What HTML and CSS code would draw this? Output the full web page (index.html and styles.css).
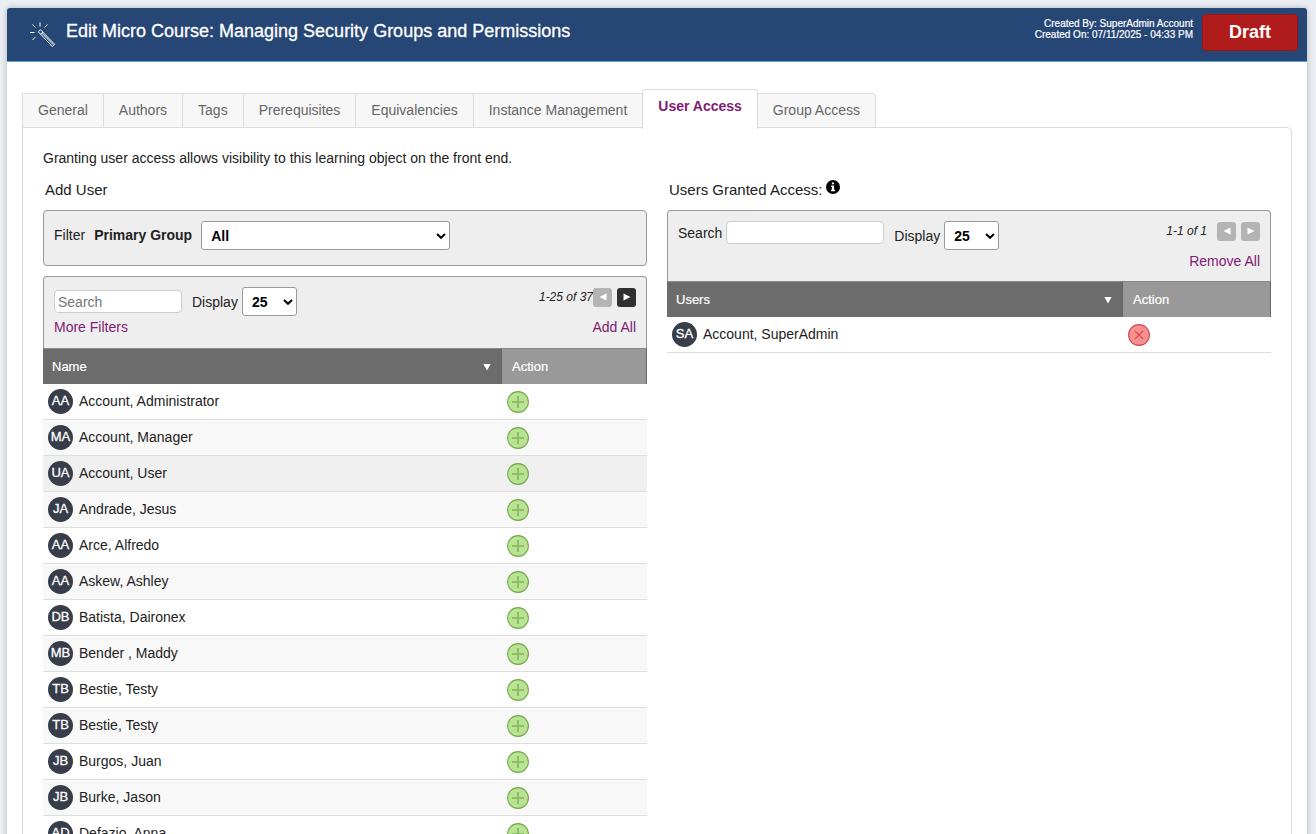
FILE: index.html
```html
<!DOCTYPE html>
<html lang="en">
<head>
<meta charset="utf-8">
<title>Edit Micro Course</title>
<link rel="stylesheet" href="styles.css">
</head>
<body>
<svg class="defs" aria-hidden="true">
  <symbol id="chev" viewBox="0 0 10 6"><path d="M1 1l4 3.8L9 1" fill="none" stroke="currentColor" stroke-width="2"/></symbol>
  <symbol id="left" viewBox="0 0 8 8"><path d="M7.5 0.5v7L0.5 4z" fill="currentColor"/></symbol>
  <symbol id="right" viewBox="0 0 8 8"><path d="M0.5 0.5v7L7.5 4z" fill="currentColor"/></symbol>
  <symbol id="down" viewBox="0 0 8 8"><path d="M0.4 1h7.2L4 7.6z" fill="currentColor"/></symbol>
  <symbol id="plus" viewBox="0 0 22 22"><circle cx="11" cy="11" r="10.4" fill="#b9e292" stroke="#72aa48" stroke-width="1.1"/><path d="M11 5v12M5 11h12" stroke="#82b65c" stroke-width="1.7"/></symbol>
</svg>
<main class="card">
  <header class="bar">
    <svg class="wand" viewBox="0 0 26 26" fill="none" stroke="currentColor" stroke-width="1" aria-hidden="true">
      <path d="M8.3 9.8l2.2-2.1L24.6 22.3 22.3 24.6zM10.6 12.2l2.3-2.2M12 11.2l11.2 11.6"/>
      <path d="M10 0.5v4M2.5 2.5l2.8 2.9M17.5 2.5l-2.8 2.9M0 10.5h4.5M2.5 18l2.8-2.9"/>
    </svg>
    <h1 class="title">Edit Micro Course: Managing Security Groups and Permissions</h1>
    <div class="meta">Created By: SuperAdmin Account<br>Created On: 07/11/2025 - 04:33 PM</div>
    <button class="draft" type="button">Draft</button>
  </header>
  <div class="content">
    <nav class="tabs">
      <a class="tab" href="#">General</a>
      <a class="tab" href="#">Authors</a>
      <a class="tab" href="#">Tags</a>
      <a class="tab" href="#">Prerequisites</a>
      <a class="tab" href="#">Equivalencies</a>
      <a class="tab" href="#">Instance Management</a>
      <a class="tab active" href="#" aria-current="page">User Access</a>
      <a class="tab" href="#">Group Access</a>
    </nav>
    <section class="panel">
      <p class="intro">Granting user access allows visibility to this learning object on the front end.</p>
      <div class="columns">
        <section>
          <h2 class="heading">Add User</h2>
          <div class="box filter">
            <span>Filter</span>
            <label class="strong" for="group">Primary Group</label>
            <span class="pick wide"><select id="group"><option>All</option></select><svg aria-hidden="true"><use href="#chev"/></svg></span>
          </div>
          <div class="box tools">
            <div>
              <div class="fields middle">
                <input class="text" type="text" placeholder="Search" aria-label="Search users">
                <label class="field">Display <span class="pick"><select><option>25</option></select><svg aria-hidden="true"><use href="#chev"/></svg></span></label>
              </div>
              <a class="link" href="#">More Filters</a>
            </div>
            <div class="side">
              <div class="pager"><i>1-25 of 37</i>
                <div class="steps"><button type="button" class="step" aria-label="Previous page" disabled><svg><use href="#left"/></svg></button><button type="button" class="step on" aria-label="Next page"><svg><use href="#right"/></svg></button></div>
              </div>
              <a class="link" href="#">Add All</a>
            </div>
          </div>
          <table class="list">
            <thead><tr><th><span class="sort">Name<svg aria-hidden="true"><use href="#down"/></svg></span></th><th class="act">Action</th></tr></thead>
            <tbody>
              <tr><td><div class="user"><span class="avatar">AA</span>Account, Administrator</div></td><td><button type="button" class="round" aria-label="Add"><svg><use href="#plus"/></svg></button></td></tr>
              <tr><td><div class="user"><span class="avatar">MA</span>Account, Manager</div></td><td><button type="button" class="round" aria-label="Add"><svg><use href="#plus"/></svg></button></td></tr>
              <tr class="hover"><td><div class="user"><span class="avatar">UA</span>Account, User</div></td><td><button type="button" class="round" aria-label="Add"><svg><use href="#plus"/></svg></button></td></tr>
              <tr><td><div class="user"><span class="avatar">JA</span>Andrade, Jesus</div></td><td><button type="button" class="round" aria-label="Add"><svg><use href="#plus"/></svg></button></td></tr>
              <tr><td><div class="user"><span class="avatar">AA</span>Arce, Alfredo</div></td><td><button type="button" class="round" aria-label="Add"><svg><use href="#plus"/></svg></button></td></tr>
              <tr><td><div class="user"><span class="avatar">AA</span>Askew, Ashley</div></td><td><button type="button" class="round" aria-label="Add"><svg><use href="#plus"/></svg></button></td></tr>
              <tr><td><div class="user"><span class="avatar">DB</span>Batista, Daironex</div></td><td><button type="button" class="round" aria-label="Add"><svg><use href="#plus"/></svg></button></td></tr>
              <tr><td><div class="user"><span class="avatar">MB</span>Bender , Maddy</div></td><td><button type="button" class="round" aria-label="Add"><svg><use href="#plus"/></svg></button></td></tr>
              <tr><td><div class="user"><span class="avatar">TB</span>Bestie, Testy</div></td><td><button type="button" class="round" aria-label="Add"><svg><use href="#plus"/></svg></button></td></tr>
              <tr><td><div class="user"><span class="avatar">TB</span>Bestie, Testy</div></td><td><button type="button" class="round" aria-label="Add"><svg><use href="#plus"/></svg></button></td></tr>
              <tr><td><div class="user"><span class="avatar">JB</span>Burgos, Juan</div></td><td><button type="button" class="round" aria-label="Add"><svg><use href="#plus"/></svg></button></td></tr>
              <tr><td><div class="user"><span class="avatar">JB</span>Burke, Jason</div></td><td><button type="button" class="round" aria-label="Add"><svg><use href="#plus"/></svg></button></td></tr>
              <tr><td><div class="user"><span class="avatar">AD</span>Defazio, Anna</div></td><td><button type="button" class="round" aria-label="Add"><svg><use href="#plus"/></svg></button></td></tr>
            </tbody>
          </table>
        </section>
        <section>
          <h2 class="heading">Users Granted Access:
            <svg class="info" viewBox="0 0 14 14" aria-hidden="true"><circle cx="7" cy="7" r="7" fill="#000"/><path d="M5.9 2.4h2.2v1.8H5.9zM5 5.4h3.1v4.4H9v1.4H5V9.8h.9v-3H5z" fill="#fff"/></svg>
          </h2>
          <div class="box tools short">
            <div>
              <div class="fields">
                <label class="field">Search <input class="text long" type="text"></label>
                <label class="field">Display <span class="pick"><select><option>25</option></select><svg aria-hidden="true"><use href="#chev"/></svg></span></label>
              </div>
            </div>
            <div class="side">
              <div class="pager spaced"><i>1-1 of 1</i>
                <div class="steps"><button type="button" class="step" aria-label="Previous page" disabled><svg><use href="#left"/></svg></button><button type="button" class="step" aria-label="Next page" disabled><svg><use href="#right"/></svg></button></div>
              </div>
              <a class="link" href="#">Remove All</a>
            </div>
          </div>
          <table class="list">
            <thead><tr><th><span class="sort">Users<svg aria-hidden="true"><use href="#down"/></svg></span></th><th class="act granted">Action</th></tr></thead>
            <tbody>
              <tr><td><div class="user"><span class="avatar">SA</span>Account, SuperAdmin</div></td><td><button type="button" class="round" aria-label="Remove"><svg viewBox="0 0 22 22"><circle cx="11" cy="11" r="10.4" fill="#f99090" stroke="#d04a50" stroke-width="1.1"/><path d="M6.8 6.8l8.4 8.4M15.2 6.8l-8.4 8.4" stroke="#d04a50" stroke-width="1.2"/></svg></button></td></tr>
            </tbody>
          </table>
        </section>
      </div>
    </section>
  </div>
</main>
</body>
</html>
```
FILE: styles.css
```css
* { box-sizing: border-box; }
body {
  margin: 0;
  height: 100vh;
  padding: 8px 9px 0 7px;
  overflow: hidden;
  background: #ebeff3;
  color: #222;
  font: 14px/20px "Liberation Sans", Arial, sans-serif;
}
button, input, select { font: inherit; }
button { padding: 0; border: 0; cursor: pointer; }
.defs { display: none; }

.card {
  min-height: 100%;
  background: #fff;
  border-radius: 4px 4px 0 0;
  box-shadow: 0 0 6px rgba(0, 0, 0, .25);
}
.bar {
  display: flex;
  align-items: flex-start;
  height: 54px;
  padding: 6px 9px 0 23px;
  background: #264676;
  border-bottom: 1px solid #55a5dc;
  border-radius: 3px 3px 0 0;
  color: #fff;
}
.wand { width: 26px; height: 26px; margin-top: 8px; }
.title { flex: 1; margin: 0 0 0 10px; font-size: 18px; line-height: 34px; font-weight: 400; -webkit-text-stroke: .3px #fff; }
.meta { margin: 4px 9px 0 0; font-size: 10px; line-height: 11px; text-align: right; -webkit-text-stroke: .2px #fff; }
.draft {
  width: 96px;
  height: 37px;
  padding-bottom: 2px;
  background: #b01c1c;
  border: 1px solid #961414;
  border-radius: 4px;
  color: #fff;
  font-size: 18px;
  font-weight: 700;
}

.content { padding: 27px 15px 0; }
.tabs { display: flex; align-items: flex-end; }
.tab {
  padding: 0 15px;
  margin-right: -1px;
  background: #f7f7f7;
  border: 1px solid #dcdcdc;
  border-bottom: 0;
  color: #666;
  line-height: 33px;
  text-decoration: none;
}
.tab:last-child { border-top-right-radius: 4px; }
.active {
  z-index: 1;
  margin-bottom: -2px;
  padding-bottom: 6px;
  background: #fff;
  border-radius: 4px 4px 0 0;
  color: #811b73;
  font-weight: 700;
}
.panel {
  padding: 20px 20px 30px;
  border: 1px solid #dcdcdc;
  border-top-right-radius: 5px;
}
.intro { margin: 0 0 12px; }
.columns { display: grid; grid-template-columns: 1fr 1fr; gap: 20px; }
.heading { display: flex; gap: 4px; margin: 0 0 10px 2px; font-size: 15px; line-height: 20px; font-weight: 400; }
.info { width: 14px; height: 14px; }

.box { background: #eee; border: 1px solid #999; border-radius: 4px; padding: 10px; }
.filter { display: flex; align-items: flex-start; gap: 9px; height: 56px; margin-bottom: 10px; line-height: 29px; }
.strong { font-weight: 700; }
.tools {
  display: flex;
  justify-content: space-between;
  height: 72px;
  border-bottom: 0;
  border-radius: 4px 4px 0 0;
}
.short { height: 71px; }
.fields { display: flex; gap: 10px; align-items: flex-start; margin-bottom: 1px; }
.middle { align-items: center; }
.field { display: flex; gap: 4px; align-items: center; }
.text { width: 128px; height: 23px; padding: 0 3px; border: 1px solid #ccc; border-radius: 4px; background: #fff; }
.text::placeholder { color: #757575; }
.long { width: 158px; }
.pick { display: grid; width: 55px; align-items: center; }
.wide { width: 249px; }
.pick > * { grid-area: 1 / 1; }
.pick select {
  width: 100%;
  height: 29px;
  padding: 0 9px;
  appearance: none;
  background: #fff;
  border: 1px solid #999;
  border-radius: 3px;
  color: #000;
  font-weight: 700;
}
.pick svg { justify-self: end; width: 10px; height: 6px; margin-right: 4px; color: #000; pointer-events: none; }
.link { color: #811b73; text-decoration: none; }
.side { text-align: right; }
.pager { display: flex; align-items: center; height: 20px; margin-bottom: 10px; font-size: 12px; }
.spaced { gap: 10px; }
.steps { display: flex; gap: 5px; }
.step {
  display: grid;
  place-items: center;
  width: 19px;
  height: 19px;
  background: #b4b4b4;
  border-radius: 3px;
  color: #fff;
}
.step svg { width: 8px; height: 8px; }
.on { background: #303030; }

.list { width: 100%; table-layout: fixed; border-collapse: separate; border-spacing: 0; }
th {
  height: 36px;
  padding: 0 10px 0 9px;
  background: #6c6c6c;
  border-top: 1px solid #888;
  border-right: 1px solid #666;
  color: #fff;
  font-size: 13px;
  font-weight: 400;
  text-align: left;
  -webkit-text-stroke: .2px #fff;
}
.sort { display: flex; align-items: center; justify-content: space-between; }
.sort svg { width: 8px; height: 8px; }
.act { width: 145px; padding-left: 10px; background: #999; }
.granted { width: 148px; }
td { height: 36px; padding: 0 5px; border-bottom: 1px solid #ddd; }
tr:nth-child(even) td { background: #f8f8f8; }
.hover td { background: #f0f0f0; }
.user { display: flex; align-items: flex-start; gap: 6px; line-height: 24px; }
.avatar {
  width: 25px;
  height: 25px;
  border-radius: 50%;
  background: #383d4a;
  color: #fff;
  font-size: 13px;
  line-height: 24px;
  text-align: center;
  -webkit-text-stroke: .3px #fff;
}
.round { display: block; background: none; }
.round svg { display: block; width: 22px; height: 22px; }
```
